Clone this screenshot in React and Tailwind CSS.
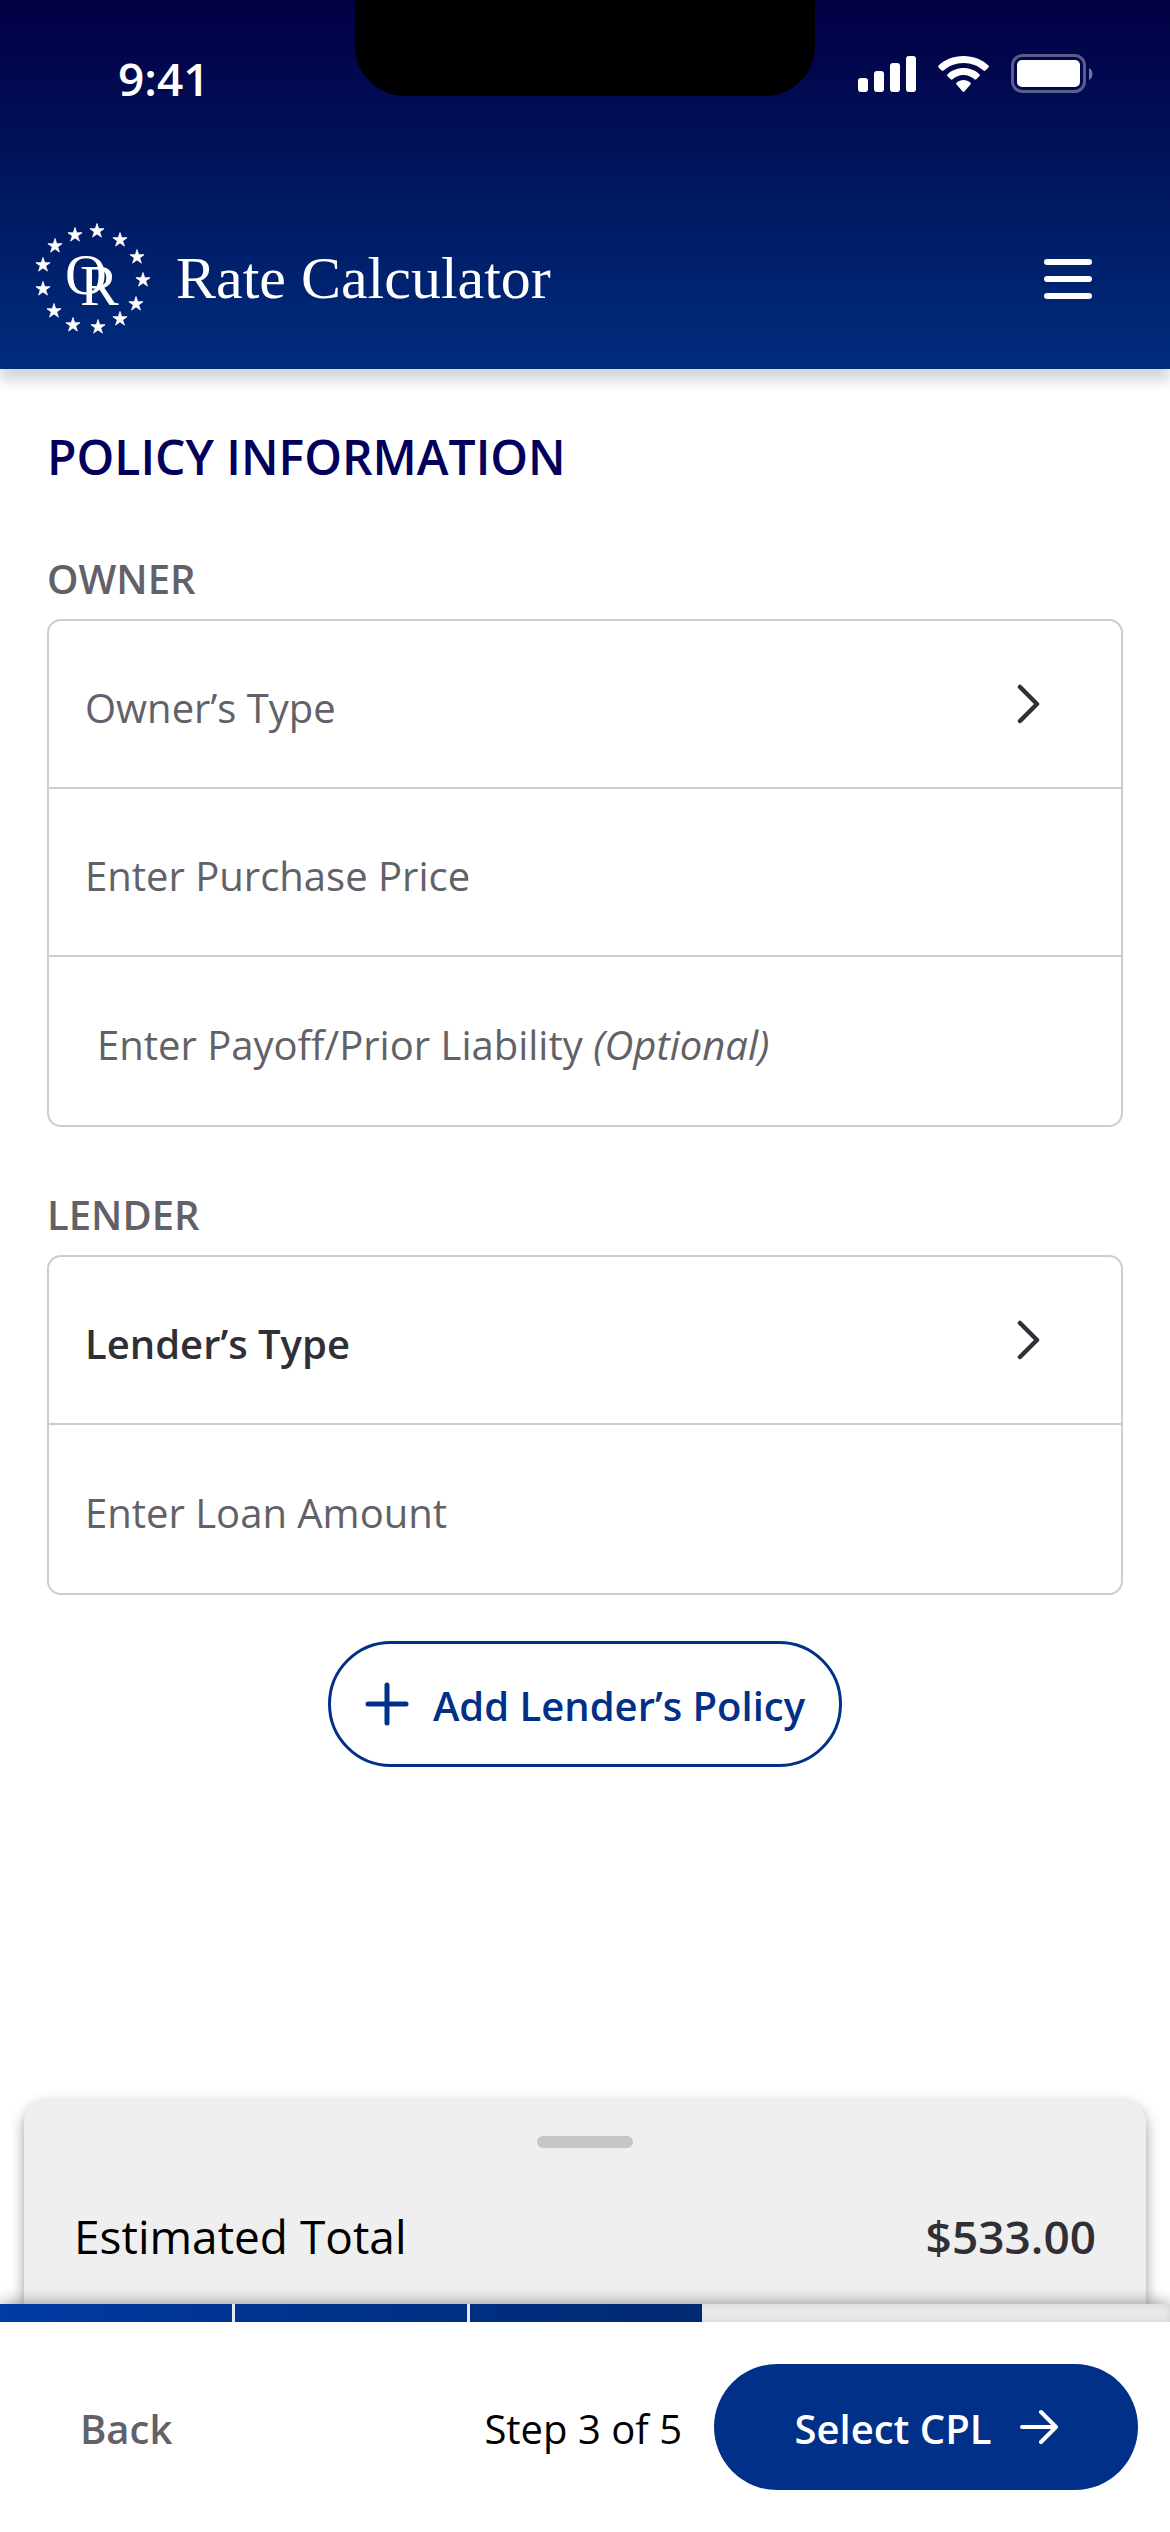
const STARS = [
  [77, 21], [100, 30], [117, 47], [123, 70], [116, 94], [100, 109], [78, 117],
  [53, 115], [34, 101], [23, 79], [23, 55], [35, 36], [55, 25],
];

const STAR_PATH =
  "M0 -7.5 L1.7 -2.3 L7.1 -2.3 L2.7 0.9 L4.4 6.1 L0 2.9 L-4.4 6.1 L-2.7 0.9 L-7.1 -2.3 L-1.7 -2.3 Z";

function Logo() {
  return (
    <svg className="h-[140px] w-[132px]" viewBox="0 0 132 140" fill="#fff" role="img" aria-label="OR">
      {STARS.map(([x, y]) => (
        <path key={`${x}-${y}`} d={STAR_PATH} transform={`translate(${x} ${y})`} stroke="#fff" strokeWidth="0.8" />
      ))}
      <text x="45" y="84" fontSize="58" fontFamily="Liberation Serif, serif">
        O<tspan dx="-27" dy="11">R</tspan>
      </text>
    </svg>
  );
}

function StatusBar() {
  return (
    <div className="relative flex h-[150px] items-start justify-between pr-[77px] pl-[118px] text-white">
      <div className="absolute top-0 left-1/2 h-24 w-[460px] -translate-x-1/2 rounded-b-[50px] bg-black" />
      <span className="pt-12 text-[46px] leading-[60px] font-semibold">9:41</span>
      <svg className="mt-[53px] h-[41px] w-[235px]" viewBox="0 0 235 41" fill="#fff" aria-hidden="true">
        <rect x="0" y="25" width="10" height="14" rx="3" />
        <rect x="16" y="18" width="10" height="21" rx="3" />
        <rect x="32" y="10" width="10" height="29" rx="3" />
        <rect x="48" y="3" width="10" height="36" rx="3" />
        <path d="M105.500 3 C95.500 3 86.500 6.600 80.500 12.600 C80 13.200 80 13.900 80.500 14.500 L83.600 17.600 C84.200 18.200 84.900 18.200 85.500 17.600 C90.700 12.700 97.800 9.900 105.500 9.900 C113.200 9.900 120.300 12.700 125.500 17.600 C126.100 18.200 126.800 18.200 127.400 17.600 L130.500 14.500 C131 13.900 131 13.200 130.500 12.600 C124.500 6.600 115.500 3 105.500 3 Z" />
        <path d="M105.500 15 C99.300 15 93.700 17.300 89.600 21.200 C89 21.800 89 22.600 89.600 23.200 L92.700 26.300 C93.200 26.900 94 26.900 94.600 26.300 C97.500 23.700 101.300 22.100 105.500 22.100 C109.700 22.100 113.500 23.700 116.400 26.300 C117 26.900 117.800 26.900 118.300 26.300 L121.400 23.200 C122 22.600 122 21.800 121.400 21.200 C117.300 17.300 111.700 15 105.500 15 Z" />
        <path d="M105.500 27 C102.900 27 100.500 27.900 98.700 29.400 C98 30 98 30.800 98.600 31.400 L104.600 38.500 C105.200 39.100 105.800 39.100 106.400 38.500 L112.400 31.400 C113 30.800 113 30 112.300 29.400 C110.500 27.900 108.100 27 105.500 27 Z" />
        <rect x="154.500" y="2.500" width="72" height="36" rx="10" fill="none" stroke="#fff" strokeOpacity="0.35" strokeWidth="3" />
        <rect x="159" y="7" width="63" height="27" rx="5" />
        <path d="M231 15 C235.500 17 235.500 25 231 27 Z" fillOpacity="0.45" />
      </svg>
    </div>
  );
}

function Header() {
  return (
    <header className="relative z-10 bg-linear-to-b from-[#020043] to-[#002d7d] shadow-[0_12px_12px_rgba(0,0,0,0.16)]">
      <StatusBar />
      <div className="flex h-[219px] items-start justify-between pt-[60px] pr-[78px] pl-5 text-white">
        <div className="flex items-center gap-6">
          <Logo />
          <span className="pb-1 font-['Liberation_Serif',serif] text-[60px] leading-[72px]">Rate Calculator</span>
        </div>
        <button type="button" aria-label="Menu" className="mt-[49px] flex w-12 flex-col gap-[11px]">
          <span className="h-1.5 w-full rounded-full bg-white" />
          <span className="h-1.5 w-full rounded-full bg-white" />
          <span className="h-1.5 w-full rounded-full bg-white" />
        </button>
      </div>
    </header>
  );
}

function SelectRow({ children, className }) {
  return (
    <button
      type="button"
      className={`flex h-[168px] w-full items-center justify-between pr-20 pl-9 text-left ${className}`}
    >
      <span className="pt-2">{children}</span>
      <svg className="h-10 w-6" viewBox="0 0 24 40" fill="none" stroke="#302f36" strokeWidth="4.500" strokeLinecap="round" strokeLinejoin="round">
        <path d="M3 3 L20 20 L3 37" />
      </svg>
    </button>
  );
}

function InputRow({ children, className = "pl-9" }) {
  return (
    <label className={`flex h-[168px] items-center gap-4 pr-10 text-[#626168] ${className}`}>
      <span className="pt-2">{children}</span>
      <input type="text" className="h-full min-w-0 flex-1 bg-transparent outline-none" />
    </label>
  );
}

function Section({ title, children }) {
  return (
    <section>
      <h2 className="text-[40px] leading-[56px] font-semibold text-[#626168]">{title}</h2>
      <div className="mt-3 divide-y-2 divide-[#cdccd0] rounded-[14px] border-2 border-[#cdccd0] text-[40px] leading-[56px]">
        {children}
      </div>
    </section>
  );
}

function EstimatedTotal() {
  return (
    <div className="mx-6 rounded-t-3xl bg-[#efefef] px-[50px] pt-[37px] shadow-[0_6px_14px_rgba(0,0,0,0.4)]">
      <div className="mx-auto h-3 w-24 rounded-full bg-[#c6c6c8]" />
      <div className="flex h-[156px] items-start justify-between pt-[56px] text-[46px] leading-[64px]">
        <span className="text-black">Estimated Total</span>
        <span className="font-semibold text-[#302f36]">$533.00</span>
      </div>
    </div>
  );
}

function Footer({ step, total }) {
  const dividers = Array.from({ length: step - 1 }, (_, i) => i);
  return (
    <footer className="relative bg-white shadow-[0_-2px_14px_rgba(0,0,0,0.35)]">
      <div className="h-[18px] bg-[#e8e8ea] shadow-[inset_0_0_6px_rgba(0,0,0,0.1)]">
        <div
          className="flex h-full justify-evenly bg-linear-to-r from-[#003aa3] to-[#002971]"
          style={{ width: `${(step / total) * 100}%` }}
        >
          {dividers.map((i) => (
            <span key={i} className="h-full w-[3px] bg-[#e8e8ea]" />
          ))}
        </div>
      </div>
      <div className="flex h-[210px] items-start justify-between pt-[42px] pr-8 pl-20 text-[40px]">
        <button type="button" className="h-[126px] pt-1 font-semibold text-[#626168]">Back</button>
        <div className="flex items-center gap-8">
          <span className="pt-1 text-black">Step {step} of {total}</span>
          <button
            type="button"
            className="flex h-[126px] w-[424px] items-center justify-center gap-7 rounded-full bg-[#003087] font-semibold text-white"
          >
            <span className="pt-1">Select CPL</span>
            <svg className="h-9 w-[38px]" viewBox="0 0 38 36" fill="none" stroke="currentColor" strokeWidth="4" strokeLinecap="round" strokeLinejoin="round">
              <path d="M2 18 H36 M21 3 L36 18 L21 33" />
            </svg>
          </button>
        </div>
      </div>
    </footer>
  );
}

export default function App() {
  return (
    <div className="flex min-h-screen flex-col overflow-x-hidden bg-white font-['Open_Sans','Noto_Sans',sans-serif]">
      <Header />
      <main className="flex flex-1 flex-col px-[47px] pt-14">
        <h1 className="text-[48px] leading-[64px] font-semibold text-[#02005a]">POLICY INFORMATION</h1>
        <div className="mt-[62px] flex flex-col gap-[60px]">
          <Section title="OWNER">
            <SelectRow className="text-[#626168]">Owner’s Type</SelectRow>
            <InputRow>Enter Purchase Price</InputRow>
            <InputRow className="pl-12">
              Enter Payoff/Prior Liability <em>(Optional)</em>
            </InputRow>
          </Section>
          <Section title="LENDER">
            <SelectRow className="font-semibold text-[#302f36]">Lender’s Type</SelectRow>
            <InputRow>Enter Loan Amount</InputRow>
          </Section>
        </div>
        <button
          type="button"
          className="mx-auto mt-[46px] flex h-[126px] items-center gap-6 rounded-full border-[3px] border-[#003087] px-[34px] text-[40px] font-semibold text-[#003087]"
        >
          <svg className="size-11" viewBox="0 0 44 44" fill="none" stroke="currentColor" strokeWidth="5" strokeLinecap="round">
            <path d="M22 3 V41 M3 22 H41" />
          </svg>
          <span className="pt-1">Add Lender’s Policy</span>
        </button>
      </main>
      <EstimatedTotal />
      <Footer step={3} total={5} />
    </div>
  );
}
